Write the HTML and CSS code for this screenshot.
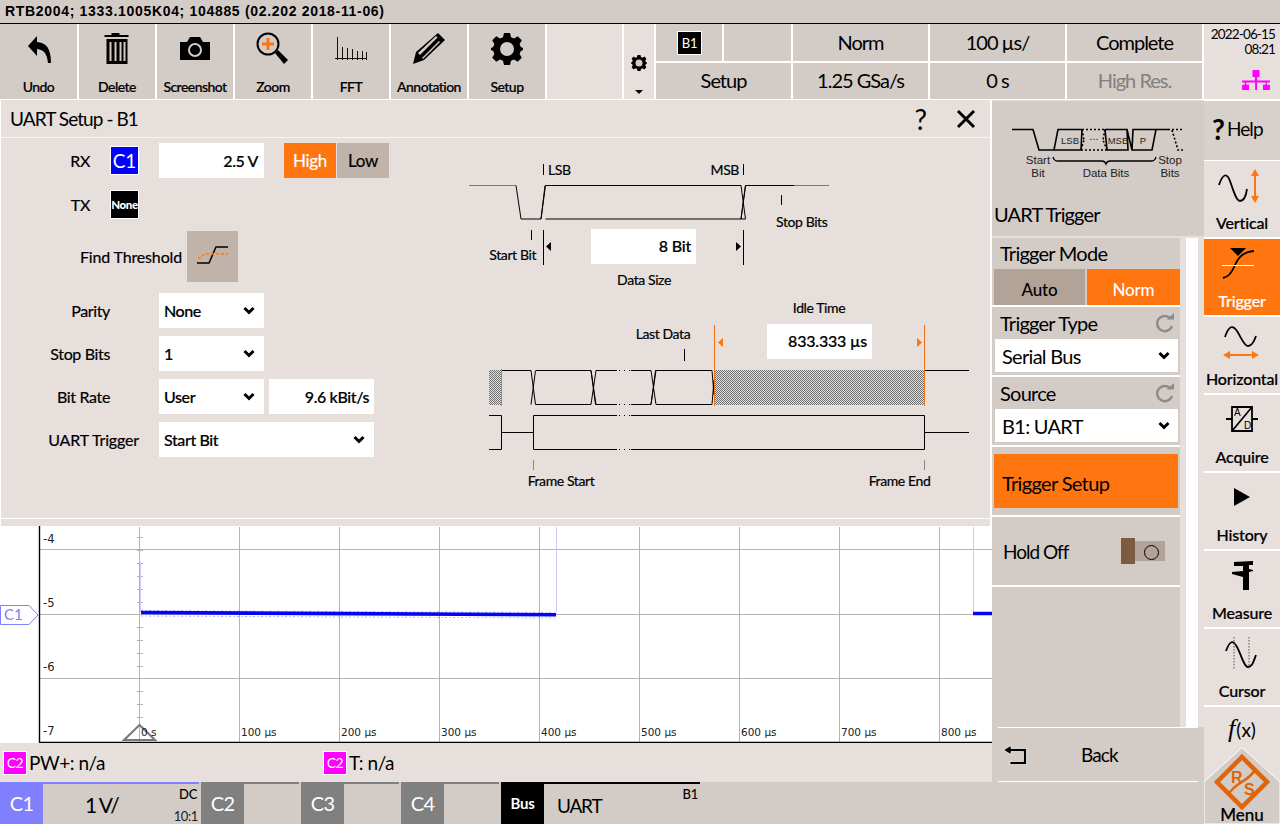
FILE: index.html
```html
<!DOCTYPE html>
<html lang="en">
<head>
<meta charset="utf-8">
<title>UART Setup - B1</title>
<link rel="stylesheet" href="styles.css">
</head>
<body>
<svg class="defs" width="0" height="0" aria-hidden="true">
  <defs>
    <symbol id="chev" viewBox="0 0 12 10"><path d="M1.500 2 6 6.500 10.500 2" fill="none" stroke="#000" stroke-width="3"/></symbol>
    <symbol id="reload" viewBox="0 0 20 20"><path d="M15.500 5.500A7.600 7.600 0 1 0 17 13" fill="none" stroke="#8c8c8c" stroke-width="2.400"/><path d="M11.500 6.500H19V0z" fill="#8c8c8c"/></symbol>
    <symbol id="gear" viewBox="0 0 32 32"><path d="M13 0h6l1 4.200 3 1.200 3.700-2.200 4.100 4.100L28.600 11l1.200 3 2.200 1v2l-2.200 1-1.200 3 2.200 3.700-4.100 4.100L23 26.600l-3 1.200-1 4.200h-6l-1-4.200-3-1.200-3.700 2.200-4.100-4.100L3.400 21l-1.200-3L0 17v-2l2.200-1 1.200-3-2.200-3.700 4.100-4.100L9 5.400l3-1.200z" fill="#000"/><circle cx="16" cy="16" r="7" fill="#d3cbc6"/></symbol>
    <pattern id="hatch" width="2" height="2" patternUnits="userSpaceOnUse"><rect width="2" height="2" fill="#e6dfdc"/><rect width="1" height="1" fill="#707070"/><rect x="1" y="1" width="1" height="1" fill="#707070"/></pattern>
  </defs>
</svg>
<div class="app">
  <header class="title">RTB2004; 1333.1005K04; 104885 (02.202 2018-11-06)</header>

  <div class="top">
    <div class="tool tool-first">
      <svg class="tool-ico" width="40" height="44" viewBox="0 0 40 44"><path d="M10 16 19 6v6c9 .5 14 6 14 21h-3c-1-9-4-13.500-11-14v7z" fill="#000" transform="translate(-1 0)"/></svg>
      <span>Undo</span>
    </div>
    <div class="tool">
      <svg class="tool-ico" width="40" height="44" viewBox="0 0 40 44"><path d="M8 5h7V3h8v2h9v2H8zM10 9h21v25H10zM13 12v19h2V12zm5 0v19h2V12zm5 0v19h2V12zm4 0v19h2V12z" fill="#000" fill-rule="evenodd" transform="translate(-.5 0)"/></svg>
      <span>Delete</span>
    </div>
    <div class="tool">
      <svg class="tool-ico" width="40" height="44" viewBox="0 0 40 44"><path d="M5 12h7l3-5h10l3 5h7v18H5z" fill="#000"/><circle cx="20" cy="20" r="6" fill="none" stroke="#d3cbc6" stroke-width="2"/></svg>
      <span>Screenshot</span>
    </div>
    <div class="tool">
      <svg class="tool-ico" width="40" height="44" viewBox="0 0 40 44"><circle cx="15" cy="14" r="10.500" fill="#d3cbc6" stroke="#000" stroke-width="2"/><path d="M15 8v12M9 14h12" stroke="#ff7510" stroke-width="3"/><path d="m22 23 3-3 10 10-4 4z" fill="#000"/></svg>
      <span>Zoom</span>
    </div>
    <div class="tool">
      <svg class="tool-ico" width="40" height="44" viewBox="0 0 40 44"><path d="M4 28.500H36M6.500 7v23M11.500 17v13M16.500 18v12M21.500 19v11M26.500 21v9M31.500 21v9M35.500 22v8" stroke="#111" stroke-width="1" fill="none"/></svg>
      <span>FFT</span>
    </div>
    <div class="tool">
      <svg class="tool-ico" width="40" height="44" viewBox="0 0 40 44"><path d="M29 3 36 10 15 30 4 34 7 22z" fill="#000"/><path d="M9 23 27 6l1.500 1.500L11 25zM13 28 30 11l1 1-17 17z" fill="#d3cbc6"/></svg>
      <span>Annotation</span>
    </div>
    <div class="tool">
      <svg class="tool-ico tool-gear" width="32" height="32" viewBox="0 0 32 32"><use href="#gear"/></svg>
      <span>Setup</span>
    </div>
    <div class="tool-blank"></div>
    <div class="gearcol">
      <svg width="16" height="16" viewBox="0 0 32 32"><use href="#gear"/></svg>
      <i class="caret"></i>
    </div>
    <div class="status">
      <div class="cell cell-b1"><b class="chip-b1">B1</b></div>
      <div class="cell cell-e"></div>
      <div class="cell">Norm</div>
      <div class="cell">100 µs/</div>
      <div class="cell">Complete</div>
      <div class="cell cell-setup">Setup</div>
      <div class="cell">1.25 GSa/s</div>
      <div class="cell">0 s</div>
      <div class="cell cell-dim">High Res.</div>
    </div>
    <div class="clock">
      <span>2022-06-15</span><span>08:21</span>
      <svg width="32" height="20" viewBox="0 0 32 23"><path d="M12 0h8v8h-8zM14.800 8h2.400v4H32v2.500h-3.500V17H32v6h-8v-6h3V14.500H17.200V23H15V14.500H5V17h3v6H0v-6h3V14.500H0V12h14.800z" fill="#ff00ff"/></svg>
    </div>
  </div>

  <div class="content">
    <div class="work">
      <div class="upper">
        <div class="left">
          <section class="dialog">
            <div class="dlg-head">
              <span class="dlg-name">UART Setup - B1</span>
              <span class="dlg-q">?</span>
              <svg class="dlg-x" width="20" height="20" viewBox="0 0 20 20"><path d="M2 2 18 18M18 2 2 18" stroke="#000" stroke-width="3"/></svg>
            </div>
            <div class="dlg-body">
              <div class="form">
                <div class="frow frow-rx">
                  <label class="lbl lbl-ch">RX</label>
                  <b class="chan chan-c1">C1</b>
                  <div class="field fld-num">2.5 V</div>
                  <div class="hl"><span class="hl-on">High</span><span class="hl-off">Low</span></div>
                </div>
                <div class="frow frow-tx">
                  <label class="lbl lbl-ch">TX</label>
                  <b class="chan chan-none">None</b>
                </div>
                <div class="frow frow-find">
                  <label class="lbl lbl-find">Find Threshold</label>
                  <div class="findbtn">
                    <svg width="34" height="24" viewBox="0 0 34 24"><path d="M1 18h12l7-16h12" fill="none" stroke="#000" stroke-width="1.500"/><path d="M2 13h3l2-3h2M10 9h22" fill="none" stroke="#ff7510" stroke-width="1.500" stroke-dasharray="3 2"/></svg>
                  </div>
                </div>
                <div class="frow">
                  <label class="lbl">Parity</label>
                  <div class="field fld-sel"><span>None</span><svg width="12" height="10"><use href="#chev"/></svg></div>
                </div>
                <div class="frow">
                  <label class="lbl">Stop Bits</label>
                  <div class="field fld-sel"><span>1</span><svg width="12" height="10"><use href="#chev"/></svg></div>
                </div>
                <div class="frow">
                  <label class="lbl">Bit Rate</label>
                  <div class="field fld-sel"><span>User</span><svg width="12" height="10"><use href="#chev"/></svg></div>
                  <div class="field fld-rate">9.6 kBit/s</div>
                </div>
                <div class="frow">
                  <label class="lbl lbl-wide">UART Trigger</label>
                  <div class="field fld-sel fld-wide"><span>Start Bit</span><svg width="12" height="10"><use href="#chev"/></svg></div>
                </div>
              </div>
              <svg class="wave" width="530" height="360" viewBox="460 138 530 360">
                <g fill="none" stroke="#000" stroke-width="1">
                  <path d="M469 185.500H516" stroke="#777"/>
                  <path d="M516 185.500 521 219H541L545.500 185.500H741L745.500 219H741M541 219 545 185.500M545.500 219H741L745.500 185.500H794M745.500 185.500 741 219"/>
                  <path d="M794 185.500H829" stroke="#777"/>
                  <path d="M543.500 164v11M743.500 164v11M781.500 195v10M531.500 230v10M543.500 230v35M743.500 230v35"/>
                  <path d="M684.500 349v12"/>
                  <path d="M501 370.500H531M531 370.500 535.500 404.500H591L596 370.500H617M535.500 370.500 531 404.500M536 370.500H591L595.500 404.500H617M596 404.500 591 370.500M631 370.500H651L656 404.500H712L714 380M631 404.500H651L655.500 370.500H712L714 395M656 370.500 651 404.500"/>
                  <path d="M925 370.500H969"/>
                  <path d="M489 415.500H501.500V449.500H489M501.500 432.500H533.500M533.500 415.500V449.500H617M631 449.500H924.500V415.500H631M617 415.500H533.500M924.500 432.500H969"/>
                  <path d="M533.500 460v10M924.500 460v10" stroke="#888"/>
                  <path d="M619 370.500h1M624 370.500h1M629 370.500h1M619 404.500h1M624 404.500h1M629 404.500h1M619 415.500h1M624 415.500h1M629 415.500h1M619 449.500h1M624 449.500h1M629 449.500h1"/>
                </g>
                <rect x="489" y="370" width="12" height="35" fill="url(#hatch)"/>
                <rect x="714" y="370" width="211" height="35" fill="url(#hatch)"/>
                <path d="M501.500 369v37M714.500 325v81M924.500 325v81" stroke="#f0701a" stroke-width="1" fill="none"/>
                <path d="M551 242v9l-5-4.500zM736 242v9l5-4.500z" fill="#000"/>
                <path d="M723 338v9l-5-4.500zM917 338v9l5-4.500z" fill="#ff7510"/>
                <rect x="591" y="229" width="105" height="35" fill="#fff"/>
                <rect x="767" y="324" width="105" height="35" fill="#fff"/>
                <g class="wtxt">
                  <text x="548" y="175">LSB</text>
                  <text x="739" y="175" text-anchor="end">MSB</text>
                  <text x="776" y="227">Stop Bits</text>
                  <text x="536" y="260" text-anchor="end">Start Bit</text>
                  <text x="644" y="285" text-anchor="middle">Data Size</text>
                  <text x="819" y="313" text-anchor="middle">Idle Time</text>
                  <text x="663" y="339" text-anchor="middle">Last Data</text>
                  <text x="561" y="486" text-anchor="middle">Frame Start</text>
                  <text x="899.500" y="486" text-anchor="middle">Frame End</text>
                  <text class="wnum" x="691" y="252" text-anchor="end">8 Bit</text>
                  <text class="wnum" x="867" y="347" text-anchor="end">833.333 µs</text>
                </g>
              </svg>
            </div>
          </section>
          <svg class="scope" width="992" height="217" viewBox="0 526 992 217">
            <rect x="0" y="526" width="992" height="217" fill="#fff"/>
            <g stroke="#b4b4b4" stroke-width="1" fill="none">
              <path d="M139.500 527V742M239.500 527V742M339.500 527V742M439.500 527V742M539.500 527V742M639.500 527V742M739.500 527V742M839.500 527V742M939.500 527V742"/>
              <path d="M40 549.500H992M40 614.500H992M40 678.500H992"/>
              <path d="M137 537.500h6M137 550.500h6M137 563.500h6M137 576.500h6M137 589.500h6M137 602.500h6M137 627.500h6M137 640.500h6M137 653.500h6M137 666.500h6M137 691.500h6M137 704.500h6M137 717.500h6"/>
            </g>
            <path d="M140.500 562V612M556.500 527V612M973.500 527V612" stroke="#c9c9ff" stroke-width="1"/>
            <path d="M141 610.500 556 612.500M141 616 556 618" stroke="#a8a8ff" stroke-width="1" stroke-dasharray="2 3 1 2"/>
            <path d="M141 612.500 556 614.800M973 613.500H992" stroke="#0505ee" stroke-width="3.600"/>
            <path d="M39.500 526V743M39 742.500H992" stroke="#000" stroke-width="1.400" fill="none"/>
            <path d="M.5 605.500H29L38 615 29 624.500H.5z" fill="#fff" stroke="#8080ff"/>
            <text class="c1tag" x="4" y="620">C1</text>
            <path d="M139.500 725 124 740H155z" fill="none" stroke="#777" stroke-width="2"/>
            <g class="sc-y">
              <text x="43" y="543">-4</text><text x="43" y="607">-5</text><text x="43" y="671">-6</text><text x="43" y="735">-7</text>
            </g>
            <g class="sc-x">
              <text x="141" y="736">0 s</text><text x="241" y="736">100 µs</text><text x="341" y="736">200 µs</text><text x="441" y="736">300 µs</text><text x="541" y="736">400 µs</text><text x="641" y="736">500 µs</text><text x="741" y="736">600 µs</text><text x="841" y="736">700 µs</text><text x="941" y="736">800 µs</text>
            </g>
          </svg>
          <div class="meas">
            <div class="meas-a"><b class="chip-c2">C2</b><span>PW+: n/a</span></div>
            <div class="meas-a"><b class="chip-c2">C2</b><span>T: n/a</span></div>
          </div>
        </div>
        <aside class="panel">
          <div class="pnl-head">
            <svg class="uart-ico" width="178" height="56" viewBox="0 0 178 56">
              <g fill="none" stroke="#000">
                <path d="M0 3.500H21L27 24H42L46 3.500H70M42 24H69L70 3.500M93 3.500H115L116 24H95L93 3.500M115 3.500 120 24H140L144 3.500 121 3.500 120 24M144 3.500H158" stroke-width="1.600"/>
                <path d="M70 3.500H93M69 24H95M69 24 72 14M70 3.500 72 14M93 3.500 91 14M95 24 91 14M160 3.500H171M160 4 166 24H171" stroke-width="1.600" stroke-dasharray="2 2"/>
                <path d="M41 31c1 4 3 4 5 4H90q3 0 4 3 1-3 4-3H139c2 0 4 0 5-4" stroke-width="1.300"/>
              </g>
              <g class="uart-t">
                <text class="uart-s" x="58" y="18" text-anchor="middle">LSB</text>
                <text x="82" y="14" text-anchor="middle">...</text>
                <text class="uart-s" x="106" y="18" text-anchor="middle">MSB</text>
                <text class="uart-s" x="131" y="18" text-anchor="middle">P</text>
                <text x="26" y="38" text-anchor="middle">Start</text>
                <text x="26" y="51" text-anchor="middle">Bit</text>
                <text x="94" y="51" text-anchor="middle">Data Bits</text>
                <text x="158" y="38" text-anchor="middle">Stop</text>
                <text x="158" y="51" text-anchor="middle">Bits</text>
              </g>
            </svg>
            <h2 class="pnl-title">UART Trigger</h2>
          </div>
          <div class="pnl-row">
            <div class="sections">
              <div class="sec sec-mode">
                <div class="sec-t">Trigger Mode</div>
                <div class="mode"><span class="mode-off">Auto</span><span class="mode-on">Norm</span></div>
              </div>
              <div class="sec">
                <div class="sec-t"><span>Trigger Type</span><svg width="20" height="20"><use href="#reload"/></svg></div>
                <div class="pick"><span>Serial Bus</span><svg width="12" height="10"><use href="#chev"/></svg></div>
              </div>
              <div class="sec">
                <div class="sec-t"><span>Source</span><svg width="20" height="20"><use href="#reload"/></svg></div>
                <div class="pick"><span>B1: UART</span><svg width="12" height="10"><use href="#chev"/></svg></div>
              </div>
              <div class="sec sec-setup"><div class="setup-btn">Trigger Setup</div></div>
              <div class="sec sec-hold">
                <span>Hold Off</span>
                <div class="toggle"><i class="tg-knob"></i><i class="tg-ring"></i></div>
              </div>
              <div class="sec-rest"></div>
            </div>
            <div class="scroll"><i class="sb-a"></i><i class="sb-b"></i><i class="sb-c"></i></div>
          </div>
          <div class="back">
            <div class="back-in">
              <svg width="24" height="20" viewBox="0 0 24 20"><path d="M.5 5 8 .5V3.500H23.500V19.500H7V16.500H20.500V6.500H8V9.500z" fill="#000" stroke="#fff" stroke-width=".7"/></svg>
              <span>Back</span>
            </div>
          </div>
        </aside>
      </div>
      <footer class="bar">
        <div class="ch ch-1"><b class="ch-n">C1</b><div class="ch-b"><span class="ch-v">1 V/</span><span class="ch-dc">DC</span><span class="ch-pr">10:1</span></div></div>
        <div class="ch ch-g"><b class="ch-n">C2</b><div class="ch-b"></div></div>
        <div class="ch ch-g"><b class="ch-n">C3</b><div class="ch-b"></div></div>
        <div class="ch ch-g"><b class="ch-n">C4</b><div class="ch-b"></div></div>
        <div class="ch ch-bus"><b class="ch-n">Bus</b><div class="ch-b"><span class="ch-u">UART</span><span class="ch-dc">B1</span></div></div>
      </footer>
    </div>
    <nav class="side">
      <div class="s-help"><span class="s-q">?</span><span class="s-hl">Help</span></div>
      <div class="s-it s-first">
        <svg width="52" height="40" viewBox="0 0 52 40"><path d="M3 18C7 6 11 6 14 14s6 20 10 20 6-5 7-12" fill="none" stroke="#000" stroke-width="1.800"/><path d="M39 4v30" stroke="#ff7510" stroke-width="2"/><path d="M35 9 39 2l4 7zM35 29l4 7 4-7z" fill="#ff7510"/></svg>
        <span>Vertical</span>
      </div>
      <div class="s-it s-on">
        <svg width="44" height="40" viewBox="0 0 44 40"><path d="M10 3h16l-8 8z" fill="#000"/><path d="M3 33c5-1 8-4 12-13S24 7 34 6" fill="none" stroke="#000" stroke-width="1.800"/><path d="M2 20.500H34" stroke="#fff" stroke-width="1"/></svg>
        <span>Trigger</span>
      </div>
      <div class="s-it">
        <svg width="44" height="40" viewBox="0 0 44 40"><path d="M5 14C9 2 13 2 17 8s7 15 11 15 6-4 8-10" fill="none" stroke="#000" stroke-width="1.800"/><path d="M6 32H36" stroke="#ff7510" stroke-width="2"/><path d="M10 28 3 32l7 4zM32 28l7 4-7 4z" fill="#ff7510"/></svg>
        <span>Horizontal</span>
      </div>
      <div class="s-it">
        <svg width="40" height="40" viewBox="0 0 40 40"><path d="M10 6h20v24H10zM10 30 30 6M4 18h6M30 18h6" fill="none" stroke="#000" stroke-width="1.800"/><text class="ad" x="12" y="15">A</text><text class="ad" x="22" y="28">D</text></svg>
        <span>Acquire</span>
      </div>
      <div class="s-it">
        <svg width="40" height="40" viewBox="0 0 40 40"><path d="M12 9 28 18 12 27z" fill="#000"/></svg>
        <span>History</span>
      </div>
      <div class="s-it">
        <svg width="40" height="40" viewBox="0 0 40 40"><path d="M12 5 31 4V8H27V12L31 13V14L27 15V33H21V20L10 17V15L21 14V9L12 9Z" fill="#000"/></svg>
        <span>Measure</span>
      </div>
      <div class="s-it">
        <svg width="40" height="40" viewBox="0 0 40 40"><path d="M4 16C8 5 11 5 15 12s7 20 11 20 5-4 8-12" fill="none" stroke="#000" stroke-width="1.800"/><path d="M12 2v32M27 2v32" stroke="#555" stroke-width="1" stroke-dasharray="1.500 1.500"/></svg>
        <span>Cursor</span>
      </div>
      <div class="s-fx"><i>f</i><span>(x)</span></div>
      <div class="s-menu">
        <svg width="76" height="77" viewBox="0 0 76 77">
          <path d="M0 35 38 .5 76 35V77H0z" fill="#d3cbc6" stroke="#fff"/>
          <path d="M38 10 63 35 38 60 13 35z" fill="none" stroke="#e0640a" stroke-width="4.500"/>
          <path d="M25 47C30 36 44 35 51 23" fill="none" stroke="#e0640a" stroke-width="2.500"/>
          <text class="rs" x="27" y="36">R</text><text class="rs" x="40" y="48">S</text>
        </svg>
        <span>Menu</span>
      </div>
    </nav>
  </div>
</div>
</body>
</html>
```
FILE: styles.css
```css
*{box-sizing:border-box;margin:0;padding:0}
html,body{width:1280px;height:824px;overflow:hidden;background:#fff}
body{font-family:Lato,"Noto Sans",sans-serif;color:#000}
i{font-style:normal}
.defs{position:absolute}
.app{width:1280px;height:824px;display:flex;flex-direction:column;background:#e6dfdc}

.title{height:24px;background:#d3cbc6;border-bottom:1px solid #000;font:bold 14px/23px "Liberation Sans",sans-serif;padding-left:5px;letter-spacing:.68px;white-space:nowrap}

.top{height:76px;display:flex;background:#fff}
.tool{width:78px;height:75px;background:#d3cbc6;border-right:2px solid #fff;display:flex;flex-direction:column;align-items:center;padding-top:6px;font-size:14px;font-weight:500;flex:none;-webkit-text-stroke:.2px #000}
.tool-first{width:79px}
.tool-ico{display:block;flex:none}
.tool-gear{margin:3px 0 9px}
.tool span{margin-top:4px;line-height:17px;letter-spacing:-.55px}
.tool-blank{width:77px;height:75px;background:#e6dfdc;border-right:2px solid #fff;flex:none}
.gearcol{width:32px;height:75px;background:#e6dfdc;border-right:2px solid #fff;display:flex;flex-direction:column;align-items:center;padding-top:31px;flex:none}
.caret{width:0;height:0;border:4px solid transparent;border-top:4px solid #000;border-bottom:0;margin-top:19px}
.status{width:548px;height:75px;display:grid;grid-template-columns:66px 67px 135px 135px 135px;grid-template-rows:37px 36px;gap:2px;background:#fff;flex:none;border-right:2px solid #fff}
.cell{background:#d3cbc6;display:flex;align-items:center;justify-content:center;font-size:20px;letter-spacing:-1px;padding-bottom:2px}
.cell-b1{justify-content:flex-start;padding:0 0 0 21px}
.chip-b1{width:25px;height:24px;background:#000;border:1px solid #fff;color:#fff;font-size:13px;font-weight:400;text-align:center;line-height:22px;letter-spacing:-.2px}
.cell-setup{grid-column:1/3}
.cell-dim{color:#808080}
.clock{flex:1;height:75px;background:#e6dfdc;display:flex;flex-direction:column;align-items:flex-end;padding:3px 5px 0 0;font-size:13.500px;line-height:14.500px;letter-spacing:-.85px;white-space:nowrap}
.clock svg{margin:14px 3px 0 0;display:block}

.content{height:724px;display:flex}
.work{width:1204px;display:flex;flex-direction:column}
.upper{height:682px;display:flex}
.left{width:992px;display:flex;flex-direction:column}
.dialog{height:426px;background:#e6dfdc;border-left:1px solid #fff;border-right:2px solid #fff;display:flex;flex-direction:column}
.dlg-head{height:38px;border-bottom:1px solid #f7f4f2;display:flex;align-items:center;padding:0 14px 0 9px;font-size:19px;flex:none;white-space:nowrap}
.dlg-name{letter-spacing:-.93px;margin-right:auto}
.dlg-q{margin-right:29px;font-size:28px;line-height:38px}
.dlg-body{height:381px;display:flex;border-bottom:1px solid #fff;position:relative}
.form{width:460px;padding-top:5px;font-size:16px;-webkit-text-stroke:.2px #000}
.frow{height:35px;margin-bottom:8px;display:flex;align-items:center}
.frow-rx{margin-bottom:11px}
.frow-tx{margin-bottom:12px;height:30px}
.frow-find{height:51px;margin-bottom:11px}
.lbl{width:109px;text-align:right;margin-right:49px;flex:none;display:block;font-size:16px;letter-spacing:-.35px;white-space:nowrap}
.lbl-ch{width:89px;margin-right:20px}
.lbl-find{width:181px;margin-right:5px;letter-spacing:-.15px}
.lbl-wide{width:138px;margin-right:20px;letter-spacing:-.15px}
.chan{width:29px;height:29px;border:1px solid #fff;color:#fff;text-align:center;font-weight:400;line-height:27px;font-size:19px;flex:none;margin-right:20px;-webkit-text-stroke:0}
.chan-c1{background:#0000ff}
.chan-none{background:#000;font-size:11.500px;font-weight:900;letter-spacing:-.4px}
.field{height:35px;background:#fff;display:flex;align-items:center;font-size:16px;flex:none;letter-spacing:-.4px}
.fld-num{width:105px;justify-content:flex-end;padding-right:6px;font-weight:500}
.fld-sel{width:105px;justify-content:space-between;padding:0 9px 0 5px;font-weight:500}
.fld-rate{width:105px;margin-left:5px;justify-content:flex-end;padding-right:5px;font-weight:500}
.fld-wide{width:215px}
.hl{display:flex;margin-left:20px;font-size:17px;height:35px;letter-spacing:-.3px}
.hl-on,.hl-off{width:52px;display:flex;align-items:center;justify-content:center}
.hl-on{background:#ff7510;color:#fff;margin-right:1px;-webkit-text-stroke:.2px #fff}
.hl-off{background:#c0b3a9}
.findbtn{width:51px;height:51px;background:#c0b3a9;display:flex;align-items:center;justify-content:center}
.wave{position:absolute;left:459px;top:0}
.wtxt text{font-family:Lato,sans-serif;font-size:14px;letter-spacing:-.4px;stroke:#000;stroke-width:.2px}
.wtxt .wnum{font-size:16px;font-weight:500;letter-spacing:-.2px}
.scope{display:block;flex:none}
.sc-y text{font:11.500px "DejaVu Sans",sans-serif;fill:#222}
.sc-x text{font:10.500px "DejaVu Sans",sans-serif;fill:#222}
.c1tag{font:15px Lato,sans-serif;fill:#8080ff}
.meas{flex:1;display:flex;background:#e6dfdc;align-items:center;padding-left:3px;font-size:19px}
.meas-a{width:320px;display:flex;align-items:center;gap:2px;letter-spacing:-.45px}
.chip-c2{width:24px;height:24px;background:#ff00ff;border:1px solid #fff;color:#fff;font-weight:400;font-size:14px;text-align:center;line-height:22px}

.panel{width:212px;display:flex;flex-direction:column;flex:none}
.pnl-head{height:135px;margin-top:1px;background:#d3cbc6;position:relative;flex:none;padding:25px 0 0 20px}
.uart-ico{display:block}
.uart-t text{font:11.500px "Liberation Sans",sans-serif;fill:#222}
.uart-t .uart-s{font-size:9.500px}
.pnl-title{position:absolute;left:2px;top:101px;font-size:20px;font-weight:400;line-height:24px;letter-spacing:-.85px}
.pnl-row{flex:1;display:flex;min-height:0;margin-top:2px}
.sections{width:188px;background:#d3cbc6;display:flex;flex-direction:column}
.sec{height:70px;border-bottom:2px solid #fff;background:#d3cbc6;flex:none}
.sec-t{height:32px;display:flex;align-items:center;justify-content:space-between;padding:0 5px 0 8px;font-size:20px;letter-spacing:-.75px}
.sec-mode{height:69px}
.sec-mode .sec-t{height:31px;padding-bottom:2px}
.mode{height:36px;display:flex;font-size:17px;padding-left:2px;gap:2px;font-weight:500;letter-spacing:-.2px}
.mode span{display:flex;align-items:center;justify-content:center;padding-top:5px}
.mode-off{width:91px;background:#b3a296}
.mode-on{width:93px;background:#ff7510;color:#fff}
.pick{height:33px;margin:0 2px 0 3px;background:#fff;display:flex;align-items:center;justify-content:space-between;padding:0 8px 0 7px;font-size:20px;letter-spacing:-.7px}
.sec-setup{padding:7px 2px 0}
.setup-btn{height:54px;background:#ff7510;display:flex;align-items:center;padding:3px 0 0 8px;font-size:20px;letter-spacing:-.65px}
.sec-hold{display:flex;align-items:center;justify-content:space-between;padding:0 15px 0 11px;font-size:19px;letter-spacing:-1px}
.toggle{width:44px;height:26px;position:relative}
.tg-knob{position:absolute;left:0;top:0;width:14px;height:26px;background:#7d5a42}
.tg-ring{position:absolute;left:14px;top:3px;width:30px;height:20px;background:#b3a296}
.tg-ring::after{content:"";position:absolute;left:8.500px;top:3.500px;width:13px;height:13px;border:1.500px solid #000;border-radius:50%}
.sec-rest{flex:1;background:#d3cbc6}
.scroll{width:24px;display:flex}
.sb-a{width:6px;background:#e6dfdc}
.sb-b{width:12px;background:#fff}
.sb-c{width:6px;background:#e6dfdc}
.back{height:55px;background:#d3cbc6;flex:none;padding-left:6px}
.back-in{height:55px;border-top:1px solid #fff;border-bottom:1px solid #fff;margin-right:6px;display:flex;align-items:center;padding-left:5px;font-size:19px;letter-spacing:-.9px}
.back-in span{margin-left:54px}

.bar{height:42px;background:#d3cbc6;display:flex;gap:2px}
.ch{display:flex;height:42px;flex:none;color:#fff}
.ch-n{width:43px;display:flex;align-items:center;justify-content:center;font-weight:400;font-size:20px;letter-spacing:-.7px}
.ch-b{flex:1;background:#d3cbc6;position:relative;color:#000}
.ch-1{width:199px;border-top:2px solid #8080ff}
.ch-1 .ch-n{background:#8080ff;margin-top:-2px}
.ch-g{width:98px}
.ch-g .ch-b{border-top:2px solid #808080}
.ch-g .ch-n{background:#808080}
.ch-bus{width:199px}
.ch-bus .ch-n{background:#000;font-size:15px;font-weight:700;letter-spacing:-.3px}
.ch-bus .ch-b{border-top:2px solid #000}
.ch-v{position:absolute;left:42px;top:7px;font-size:21px;line-height:28px;letter-spacing:-1.500px}
.ch-dc{position:absolute;right:2px;top:2px;font-size:13px;line-height:16px;font-weight:500;letter-spacing:-.3px}
.ch-pr{position:absolute;right:1px;top:24px;font-size:13px;line-height:16px;color:#222;letter-spacing:-.4px}
.ch-u{position:absolute;left:13px;top:9px;font-size:19px;line-height:26px;letter-spacing:-1.200px}

.side{width:76px;display:flex;flex-direction:column;background:#fff}
.s-help{height:59px;background:#d8d0cb;display:flex;align-items:center;padding:0 0 4px 8px;gap:2px;font-size:19px;margin-top:1px;flex:none}
.s-q{font-size:28px;font-weight:700;line-height:34px}
.s-hl{letter-spacing:-.9px}
.s-it{height:76px;margin-top:2px;background:#e6dfdc;display:flex;flex-direction:column;align-items:center;padding-top:6px;font-size:16px;font-weight:500;flex:none;-webkit-text-stroke:.2px #000}
.s-first{margin-top:1px}
.s-it span{line-height:20px;margin-top:6px;letter-spacing:-.15px}
.s-it svg{display:block;flex:none}
.s-on{background:#ff7510;color:#fff;-webkit-text-stroke:.2px #fff}
.s-fx{height:40px;margin-top:2px;background:#e6dfdc;text-align:center;line-height:46px;flex:none;font-size:19px}
.s-fx i{font:italic 26px "Liberation Serif",serif;margin-right:1px}
.s-menu{flex:1;background:#e6dfdc;position:relative;display:flex;justify-content:center;align-items:flex-end;font-size:17px;font-weight:500;-webkit-text-stroke:.2px #000}
.s-menu svg{position:absolute;left:0;top:0}
.s-menu span{position:relative;line-height:19px}
.rs{font:bold 16px "Liberation Sans",sans-serif;fill:#e0640a;-webkit-text-stroke:0}
.ad{font:10px "Liberation Sans",sans-serif;fill:#000;-webkit-text-stroke:0}
```
